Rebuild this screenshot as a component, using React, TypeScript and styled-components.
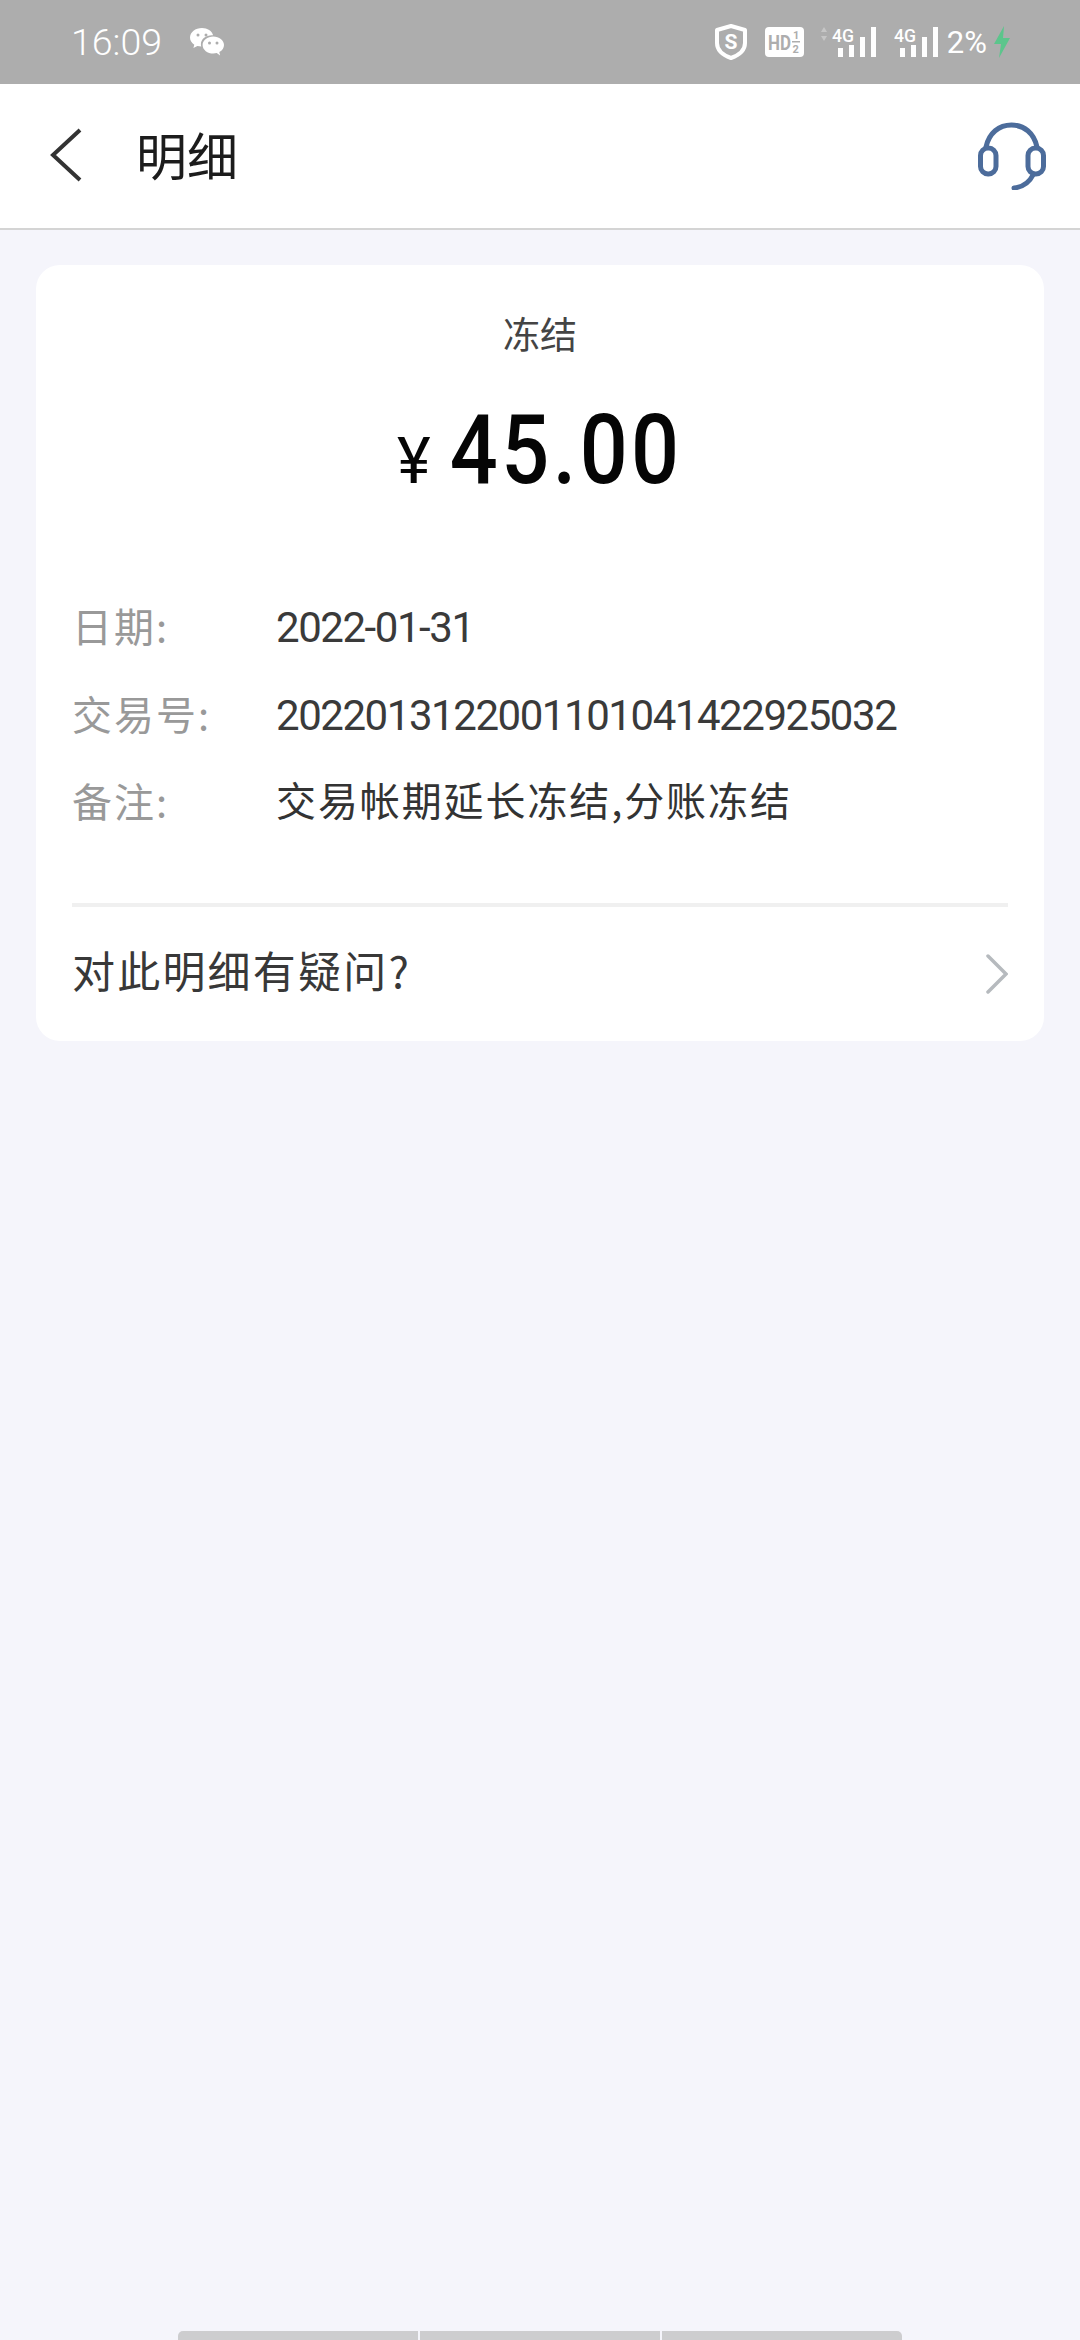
import styled, { createGlobalStyle } from "styled-components";

const GlobalStyle = createGlobalStyle`
  html, body {
    margin: 0;
    padding: 0;
    background: #f5f5fb;
  }
  body {
    font-family: "Noto Sans CJK SC", Roboto, sans-serif;
  }
`;

const Page = styled.div`
  width: 1080px;
  height: 2340px;
  display: flex;
  flex-direction: column;
  overflow: hidden;
  background: #f5f5fb;
`;

const StatusBar = styled.div`
  height: 84px;
  flex: none;
  box-sizing: border-box;
  padding: 0 69px 0 71px;
  display: flex;
  align-items: center;
  justify-content: space-between;
  background: #adadad;
  color: #fff;
  .left {
    display: flex;
    align-items: center;
    gap: 28px;
  }
  .time {
    font-family: Roboto, sans-serif;
    font-weight: 300;
    font-size: 37.5px;
    line-height: 84px;
  }
  .right {
    display: flex;
    align-items: center;
  }
  .percent {
    font-family: Roboto, sans-serif;
    font-size: 31px;
    margin: 0 6px 0 9px;
  }
`;

const NavBar = styled.div`
  height: 146px;
  flex: none;
  box-sizing: border-box;
  padding: 0 34px 0 50px;
  display: flex;
  align-items: center;
  background: #fff;
  border-bottom: 2px solid #d4d4d4;
  .back {
    width: 32px;
    height: 54px;
    margin-top: -2px;
  }
  .title {
    margin: -4px 0 0 54px;
    flex: 1;
    font-weight: 400;
    font-size: 51px;
    line-height: 60px;
    color: #1c1c1c;
  }
`;

const Main = styled.div`
  flex: 1;
  padding: 35px 36px 0;
`;

const Card = styled.div`
  height: 776px;
  box-sizing: border-box;
  padding: 43px 36px 0;
  border-radius: 24px;
  background: #fff;
`;

const StateLabel = styled.div`
  text-align: center;
  font-size: 37px;
  line-height: 50px;
  color: #444;
`;

const Amount = styled.div`
  height: 100px;
  margin-top: 42px;
  display: flex;
  align-items: baseline;
  justify-content: center;
  gap: 18px;
  color: #050505;
  font-family: Roboto, sans-serif;
  .unit {
    font-size: 64px;
    font-weight: 400;
    line-height: 100px;
  }
  .value {
    display: inline-block;
    margin: 0 -15px;
    font-size: 96px;
    font-weight: 500;
    line-height: 100px;
    letter-spacing: 3.9px;
    transform: scaleX(0.88);
  }
`;

const Details = styled.div`
  margin-top: 103px;
  display: flex;
  flex-direction: column;
  gap: 37.5px;
`;

const Row = styled.div`
  display: flex;
  height: 50px;
  line-height: 50px;
  font-size: 40px;
  .label {
    width: 204px;
    flex: none;
    margin-top: -3px;
    color: #999;
    letter-spacing: 2px;
  }
  .value {
    margin-top: -4px;
    color: #333;
    letter-spacing: 1.9px;
  }
  .digits {
    font-family: Roboto, sans-serif;
    font-weight: 400;
    font-size: 42px;
    color: #3a3a3a;
    letter-spacing: -1.45px;
  }
`;

const Question = styled.div`
  margin-top: 75px;
  height: 138px;
  display: flex;
  align-items: center;
  justify-content: space-between;
  border-top: 4px solid #f0f0f0;
  box-sizing: border-box;
  font-size: 43px;
  letter-spacing: 2.2px;
  color: #383838;
  .text {
    margin-top: -10px;
  }
  svg {
    flex: none;
  }
`;

const HomeBar = styled.div`
  flex: none;
  height: 9px;
  padding: 0 178px;
  display: flex;
  gap: 2px;
  span {
    flex: 1;
    background: #cdcdcf;
  }
  span:first-child {
    border-top-left-radius: 5px;
  }
  span:last-child {
    border-top-right-radius: 5px;
  }
`;

function WeChatIcon() {
  return (
    <svg width="34" height="28" viewBox="0 0 34 28">
      <path d="M12 0C5.400 0 0 4.200 0 9.600c0 3 1.700 5.500 4.300 7.200L3.400 20l4-2c1.200.3 2.600.5 3.900.5-.2-.8-.4-1.500-.4-2.300 0-5.200 5-9 11-9 .4 0 .8 0 1.200.1C22 3 17.400 0 12 0z" fill="#fff" />
      <path d="M34 17c0-4.900-4.900-8.600-10.700-8.600S12.600 12.100 12.600 17s4.900 8.600 10.700 8.600c1.200 0 2.300-.2 3.400-.5l3.400 2.400-.8-3.500C32.400 22.400 34 19.900 34 17z" fill="#fff" />
      <circle cx="8" cy="7" r="1.500" fill="#adadad" />
      <circle cx="16" cy="7" r="1.500" fill="#adadad" />
      <circle cx="19.500" cy="15" r="1.500" fill="#adadad" />
      <circle cx="27" cy="15" r="1.500" fill="#adadad" />
    </svg>
  );
}

function ShieldIcon() {
  return (
    <svg width="32" height="36" viewBox="0 0 32 36" style={{ marginRight: 18 }}>
      <path d="M16 2 L30 6 V19 C30 27 23 31.500 16 34 C9 31.500 2 27 2 19 V6 Z" fill="none" stroke="#fff" strokeWidth="4" strokeLinejoin="round" />
      <text x="16" y="25" textAnchor="middle" fontFamily="Roboto, sans-serif" fontWeight="700" fontSize="21" fill="#fff">S</text>
    </svg>
  );
}

function HdIcon() {
  return (
    <svg width="39" height="30" viewBox="0 0 39 30" style={{ marginRight: 17 }}>
      <rect width="39" height="30" rx="4" fill="#fff" />
      <text x="3" y="23" fontFamily="Roboto, sans-serif" fontWeight="700" fontSize="21" textLength="23" lengthAdjust="spacingAndGlyphs" fill="#adadad">HD</text>
      <text x="28" y="12" fontFamily="Roboto, sans-serif" fontWeight="700" fontSize="11" fill="#adadad">1</text>
      <rect x="27" y="14" width="8" height="1.500" fill="#adadad" />
      <text x="27.500" y="26" fontFamily="Roboto, sans-serif" fontWeight="700" fontSize="11" fill="#adadad">2</text>
    </svg>
  );
}

function SignalIcon({ arrows }: { arrows?: boolean }) {
  // the first slot carries the data arrows on its left, both share the same bars
  return (
    <svg width={arrows ? 55 : 44} height="36" viewBox={arrows ? "-11 0 55 36" : "0 0 44 36"} style={{ marginRight: arrows ? 18 : 0 }}>
      {arrows && <path d="M-8 3 L-5 8 H-11 Z M-8 17 L-5 12 H-11 Z" fill="#c6c6c6" />}
      <text x="0" y="18" fontFamily="Roboto, sans-serif" fontWeight="500" fontSize="19" textLength="22" lengthAdjust="spacingAndGlyphs" fill="#fff">4G</text>
      <rect x="6" y="24" width="5" height="9" fill="#fff" />
      <rect x="17" y="21" width="5" height="12" fill="#fff" />
      <rect x="28" y="13" width="5" height="20" fill="#fff" />
      <rect x="39" y="3" width="5" height="30" fill="#fff" />
    </svg>
  );
}

function BoltIcon() {
  return (
    <svg width="18" height="32" viewBox="0 0 18 32">
      <path d="M11 0 L1 18 H8 L6 32 L17 12 H10 Z" fill="#5cc58c" />
    </svg>
  );
}

function HeadsetIcon() {
  return (
    <svg width="68" height="68" viewBox="0 0 68 68" fill="none" stroke="#4c6c9b" strokeWidth="5" strokeLinecap="round">
      <path d="M8 25 C11 11 21 3 33.500 3 C46 3 56 11 59 25" />
      <rect x="2.500" y="26" width="15.500" height="26" rx="7.500" />
      <rect x="50" y="26" width="15.500" height="26" rx="7.500" />
      <path d="M55 53 C51 61 45 65 36 66" />
    </svg>
  );
}

export default function App() {
  return (
    <>
      <GlobalStyle />
      <Page>
        <StatusBar>
          <div className="left">
            <span className="time">16:09</span>
            <WeChatIcon />
          </div>
          <div className="right">
            <ShieldIcon />
            <HdIcon />
            <SignalIcon arrows />
            <SignalIcon />
            <span className="percent">2%</span>
            <BoltIcon />
          </div>
        </StatusBar>
        <NavBar>
          <svg className="back" viewBox="0 0 32 54" fill="none" stroke="#333" strokeWidth="4">
            <path d="M30 2 L3 27 L30 52" />
          </svg>
          <h1 className="title">明细</h1>
          <HeadsetIcon />
        </NavBar>
        <Main>
          <Card>
            <StateLabel>冻结</StateLabel>
            <Amount>
              <span className="unit">¥</span>
              <span className="value">45.00</span>
            </Amount>
            <Details>
              <Row>
                <span className="label">日期:</span>
                <span className="digits">2022-01-31</span>
              </Row>
              <Row>
                <span className="label">交易号:</span>
                <span className="digits">2022013122001101041422925032</span>
              </Row>
              <Row>
                <span className="label">备注:</span>
                <span className="value">交易帐期延长冻结,分账冻结</span>
              </Row>
            </Details>
            <Question>
              <span className="text">对此明细有疑问?</span>
              <svg width="22" height="40" viewBox="0 0 22 40" fill="none" stroke="#b6babe" strokeWidth="3.500" strokeLinecap="round">
                <path d="M2 2 L20 20 L2 38" />
              </svg>
            </Question>
          </Card>
        </Main>
        <HomeBar>
          <span />
          <span />
          <span />
        </HomeBar>
      </Page>
    </>
  );
}
